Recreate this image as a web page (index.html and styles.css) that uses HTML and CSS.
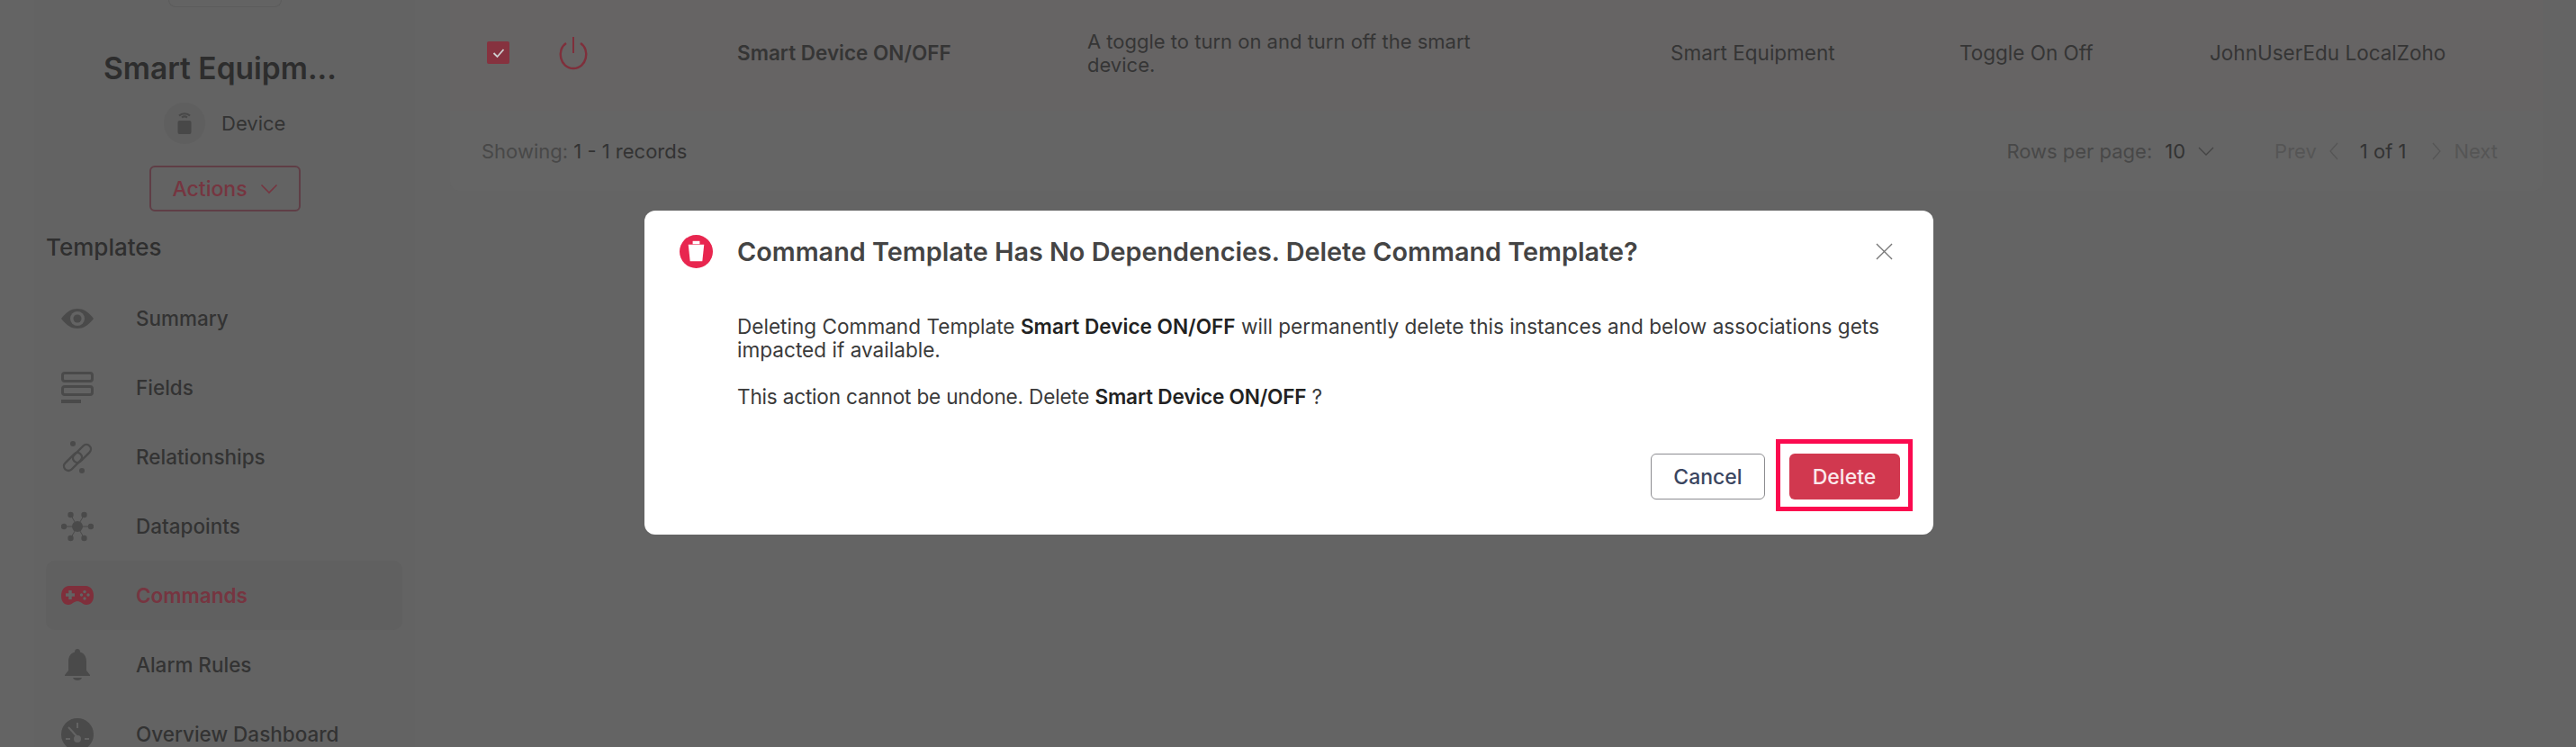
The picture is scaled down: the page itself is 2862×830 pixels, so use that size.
FILE: index.html
```html
<!DOCTYPE html>
<html lang="en">
<head>
    <meta charset="UTF-8">
    <meta name="viewport" content="width=device-width, initial-scale=1.0">
    <title>Commands</title>
    <link rel="stylesheet" href="styles.css">
</head>
<body>
    <div class="page">
        <aside class="sidebar">
            <div class="avatar-stub"></div>
            <h1 class="device-name">Smart Equipm...</h1>
            <div class="device-type">
                <span class="device-icon">
                    <svg width="18" height="26" viewBox="0 0 18 26"><path d="M3 4.5 C6 1.5 12 1.5 15 4.5 M6 6.5 C8 5 10 5 12 6.5" fill="none" stroke="#484848" stroke-width="2"/><rect x="1.5" y="10" width="15" height="15" rx="2" fill="#484848"/></svg>
                </span>
                <span>Device</span>
            </div>
            <button class="actions-btn">Actions
                <svg width="20" height="12" viewBox="0 0 20 12"><path d="M1.5 1.5 L10 10 L18.5 1.5" fill="none" stroke="#763540" stroke-width="1.6"/></svg>
            </button>
            <div class="side-title">Templates</div>
            <nav class="side-nav">
                <a class="side-item">
                    <svg class="side-icon" width="36" height="22" viewBox="0 0 36 22"><path d="M0 11 C6 3 12 0 18 0 C24 0 30 3 36 11 C30 19 24 22 18 22 C12 22 6 19 0 11 Z" fill="#4a4a4a"/><circle cx="18" cy="11" r="8" fill="#636363"/><circle cx="18" cy="11" r="4.5" fill="#4a4a4a"/></svg>
                    <span>Summary</span>
                </a>
                <a class="side-item">
                    <svg class="side-icon" width="36" height="36" viewBox="0 0 36 36"><rect x="1.5" y="1.5" width="33" height="9" rx="2.5" fill="none" stroke="#4a4a4a" stroke-width="3"/><rect x="1.5" y="16.5" width="33" height="9" rx="2.5" fill="none" stroke="#4a4a4a" stroke-width="3"/><rect x="0" y="31" width="22" height="4" fill="#4a4a4a"/></svg>
                    <span>Fields</span>
                </a>
                <a class="side-item">
                    <svg class="side-icon" width="36" height="36" viewBox="0 0 36 36"><circle cx="13" cy="3" r="3" fill="#4a4a4a"/><circle cx="23" cy="33" r="3" fill="#4a4a4a"/><rect x="11" y="9" width="24" height="10" rx="5" transform="rotate(-45 23 14)" fill="none" stroke="#4a4a4a" stroke-width="2.4"/><rect x="1" y="18" width="24" height="10" rx="5" transform="rotate(-45 13 23)" fill="none" stroke="#4a4a4a" stroke-width="2.4"/></svg>
                    <span>Relationships</span>
                </a>
                <a class="side-item">
                    <svg class="side-icon" width="36" height="34" viewBox="0 0 36 34"><path d="M18 17 L3 17 M18 17 L33 17 M18 17 L10.500 4 M18 17 L25.500 4 M18 17 L10.500 30 M18 17 L25.500 30" stroke="#4a4a4a" stroke-width="1"/><circle cx="18" cy="17" r="6" fill="#4a4a4a"/><circle cx="3" cy="17" r="3.200" fill="#4a4a4a"/><circle cx="33" cy="17" r="3.200" fill="#4a4a4a"/><circle cx="10.500" cy="4" r="3.200" fill="#4a4a4a"/><circle cx="25.500" cy="4" r="3.200" fill="#4a4a4a"/><circle cx="10.500" cy="30" r="3.200" fill="#4a4a4a"/><circle cx="25.500" cy="30" r="3.200" fill="#4a4a4a"/></svg>
                    <span>Datapoints</span>
                </a>
                <a class="side-item side-item-active">
                    <svg class="side-icon" width="36" height="22" viewBox="0 0 36 22"><path d="M9 0 H27 C33 0 36 5 36 11 C36 18 32 21 28 21 C24 21 22 17 18 17 C14 17 12 21 8 21 C4 21 0 18 0 11 C0 5 3 0 9 0 Z" fill="#7f2f3b"/><path d="M10 5 V15 M5 10 H15" stroke="#636363" stroke-width="3.500"/><circle cx="26" cy="6.500" r="1.700" fill="#636363"/><circle cx="26" cy="14" r="1.700" fill="#636363"/><circle cx="22.500" cy="10" r="1.700" fill="#636363"/><circle cx="30" cy="10" r="1.700" fill="#636363"/></svg>
                    <span>Commands</span>
                </a>
                <a class="side-item">
                    <svg class="side-icon" width="28" height="36" viewBox="0 0 28 36"><path d="M14 0 C16 0 17 1.500 17 3.500 C22 5 24 9 24 14 V24 L28 29 V30 H0 V29 L4 24 V14 C4 9 6 5 11 3.500 C11 1.500 12 0 14 0 Z" fill="#4a4a4a"/><path d="M9 32 H19 C18 36 10 36 9 32 Z" fill="#4a4a4a"/></svg>
                    <span>Alarm Rules</span>
                </a>
                <a class="side-item">
                    <svg class="side-icon" width="36" height="36" viewBox="0 0 36 36"><circle cx="18" cy="18" r="18" fill="#4a4a4a"/><path d="M18 5 V11 M5 23 H10 M26 23 H31 M8 10 L19 22" stroke="#636363" stroke-width="2"/><circle cx="18" cy="23" r="4" fill="#636363"/></svg>
                    <span>Overview Dashboard</span>
                </a>
            </nav>
        </aside>

        <main class="content">
            <div class="table-row">
                <span class="cell-check">
                    <svg width="14" height="12" viewBox="0 0 14 12"><path d="M1.5 6 L5.5 10 L12.500 2" fill="none" stroke="#cfcfcf" stroke-width="1.800"/></svg>
                </span>
                <span class="cell-icon">
                    <svg width="34" height="38" viewBox="0 0 34 38"><path d="M17 1 V19" fill="none" stroke="#7f2f3b" stroke-width="2"/><path d="M9 8 C-2 15 2 36 17 36 C32 36 36 15 25 8" fill="none" stroke="#7f2f3b" stroke-width="2.400"/></svg>
                </span>
                <span class="cell-name">Smart Device ON/OFF</span>
                <span class="cell-desc">A toggle to turn on and turn off the smart device.</span>
                <span class="cell-equip">Smart Equipment</span>
                <span class="cell-label">Toggle On Off</span>
                <span class="cell-user">JohnUserEdu LocalZoho</span>
            </div>
            <div class="table-footer">
                <div class="records"><span class="muted">Showing:</span> 1 - 1 records</div>
                <div class="pager">
                    <span class="muted">Rows per page:</span>
                    <span class="rows-num">10</span>
                    <svg width="18" height="10" viewBox="0 0 18 10"><path d="M1 1 L9 9 L17 1" fill="none" stroke="#444" stroke-width="1.300"/></svg>
                    <span class="faint prev">Prev</span>
                    <svg width="10" height="20" viewBox="0 0 10 20"><path d="M9 1 L1 10 L9 19" fill="none" stroke="#555" stroke-width="1.200"/></svg>
                    <span class="page-num">1 of 1</span>
                    <svg width="10" height="20" viewBox="0 0 10 20"><path d="M1 1 L9 10 L1 19" fill="none" stroke="#555" stroke-width="1.200"/></svg>
                    <span class="faint">Next</span>
                </div>
            </div>
        </main>
    </div>

    <div class="overlay">
        <div class="dialog">
            <div class="dialog-head">
                <svg class="dialog-icon" width="37" height="37" viewBox="0 0 38 38">
                    <circle cx="19" cy="19" r="19" fill="#e8264f"/>
                    <rect x="15" y="7" width="8" height="3.500" fill="#fff"/>
                    <path d="M10 11 H28 L26 30 H12 Z" fill="#fff"/>
                </svg>
                <h2 class="dialog-title">Command Template Has No Dependencies. Delete Command Template?</h2>
                <svg class="dialog-close" width="19" height="19" viewBox="0 0 20 20"><path d="M1 1 L19 19 M19 1 L1 19" stroke="#777" stroke-width="1.400"/></svg>
            </div>
            <div class="dialog-body">
                <p>Deleting Command Template <b>Smart Device ON/OFF</b> will permanently delete this instances and below associations gets impacted if available.</p>
                <p class="confirm">This action cannot be undone. Delete <b>Smart Device ON/OFF</b> ?</p>
            </div>
            <div class="dialog-foot">
                <button class="btn-cancel">Cancel</button>
                <div class="highlight-box"><button class="btn-delete">Delete</button></div>
            </div>
        </div>
    </div>
</body>
</html>
```

FILE: styles.css
```css
* {
    box-sizing: border-box;
}

html, body {
    margin: 0;
    padding: 0;
    height: 100%;
    overflow: hidden;
}

body {
    font-family: Inter, "Noto Sans", sans-serif;
    background-color: #646464;
    color: #333333;
    position: relative;
}

.page {
    display: flex;
    height: 830px;
    padding-left: 38px;
}

/* Sidebar */
.sidebar {
    width: 423px;
    height: 830px;
    background-color: #636363;
    overflow: hidden;
    flex-shrink: 0;
    padding-left: 13px;
}

.avatar-stub {
    width: 126px;
    height: 8px;
    margin-left: 136px;
    border: 1px solid #5c5c5c;
    border-top: none;
    border-radius: 0 0 12px 12px;
}

.device-name {
    margin: 47px 0 0 0;
    width: 387px;
    text-align: center;
    font-size: 33.5px;
    line-height: 42px;
    font-weight: 600;
    color: #2d2d2d;
}

.device-type {
    display: flex;
    align-items: center;
    gap: 18px;
    margin: 17px 0 0 131px;
    font-size: 22px;
    color: #333333;
}

.device-icon {
    width: 46px;
    height: 46px;
    border-radius: 50%;
    background-color: #5f5f5f;
    display: flex;
    align-items: center;
    justify-content: center;
}

.actions-btn {
    display: flex;
    align-items: center;
    justify-content: center;
    gap: 14px;
    width: 168px;
    height: 51px;
    margin: 24px 0 0 115px;
    background: transparent;
    border: 2px solid #5f3e46;
    border-radius: 6px;
    font-family: inherit;
    font-size: 23px;
    font-weight: 500;
    color: #763540;
}

.side-title {
    margin-top: 24px;
    font-size: 26px;
    line-height: 32px;
    font-weight: 500;
    color: #2f2f2f;
}

.side-nav {
    margin-top: 24px;
    width: 396px;
}

.side-item {
    display: flex;
    align-items: center;
    height: 77px;
    font-size: 22.5px;
    font-weight: 500;
    color: #333333;
    position: relative;
    padding-left: 100px;
    border-radius: 10px;
}

.side-icon {
    position: absolute;
    left: 35px;
    top: 50%;
    transform: translate(-50%, -50%);
}

.side-item-active {
    background-color: #606060;
    color: #763540;
    font-weight: 600;
}

/* Table */
.content {
    margin-left: 39px;
    width: 2325px;
    flex-shrink: 0;
}

.table-row {
    height: 123px;
    padding-bottom: 6px;
    display: flex;
    align-items: center;
    font-size: 22.5px;
    color: #353535;
    background-color: #666464;
}

.cell-check {
    width: 25px;
    height: 25px;
    margin-left: 41px;
    background-color: #86323f;
    border-radius: 2px;
    display: flex;
    align-items: center;
    justify-content: center;
    flex-shrink: 0;
}

.cell-icon {
    margin-left: 54px;
    width: 34px;
    height: 38px;
    flex-shrink: 0;
}

.cell-name {
    margin-left: 165px;
    width: 389px;
    font-weight: 600;
    flex-shrink: 0;
}

.cell-desc {
    width: 648px;
    padding-right: 190px;
    line-height: 26px;
    font-size: 22px;
    flex-shrink: 0;
}

.cell-equip {
    width: 321px;
    flex-shrink: 0;
}

.cell-label {
    width: 278px;
    flex-shrink: 0;
}

.cell-user {
    white-space: nowrap;
}

.table-footer {
    height: 89px;
    display: flex;
    align-items: center;
    justify-content: space-between;
    padding: 0 50px 0 35px;
    font-size: 22px;
    background-color: #656565;
    border-radius: 0 0 10px 10px;
}

.muted {
    color: #484848;
}

.faint {
    color: #555555;
}

.pager {
    display: flex;
    align-items: center;
    gap: 14px;
}

.rows-num {
    color: #333333;
}

.prev {
    margin-left: 53px;
}

.page-num {
    margin: 0 15px 0 10px;
    color: #333333;
}

/* Dialog */
.overlay {
    position: absolute;
    top: 234px;
    left: 716px;
}

.dialog {
    width: 1432px;
    height: 360px;
    background-color: #ffffff;
    border-radius: 12px;
    display: flex;
    flex-direction: column;
}

.dialog-head {
    display: flex;
    align-items: center;
    height: 90px;
    padding: 0 45px 0 39px;
}

.dialog-icon {
    flex-shrink: 0;
}

.dialog-title {
    flex: 1;
    margin: 0 0 0 27px;
    font-size: 28.8px;
    font-weight: 600;
    color: #444444;
}

.dialog-body {
    padding: 26px 40px 0 103px;
    font-size: 22.6px;
    line-height: 26px;
    color: #3a3a3a;
}

.dialog-body p {
    margin: 0 0 26px 0;
}

.dialog-body .confirm {
    letter-spacing: -0.2px;
}

.dialog-body b {
    font-weight: 600;
    color: #222222;
}

.dialog-foot {
    margin-top: auto;
    display: flex;
    align-items: flex-end;
    justify-content: flex-end;
    gap: 12px;
    padding: 0 23px 26px 0;
}

.btn-cancel {
    width: 127px;
    height: 51px;
    margin-bottom: 13px;
    background-color: #ffffff;
    border: 1.500px solid #8c8c90;
    border-radius: 6px;
    font-family: inherit;
    font-size: 23px;
    font-weight: 500;
    color: #3a4560;
}

.highlight-box {
    width: 152px;
    height: 80px;
    padding-bottom: 8px;
    border: 5px solid #fb0a4f;
    display: flex;
    align-items: flex-end;
    justify-content: center;
}

.btn-delete {
    width: 123px;
    height: 51px;
    background-color: #d1384f;
    border: none;
    border-radius: 6px;
    font-family: inherit;
    font-size: 23px;
    font-weight: 500;
    color: #fbe9ec;
}
```
